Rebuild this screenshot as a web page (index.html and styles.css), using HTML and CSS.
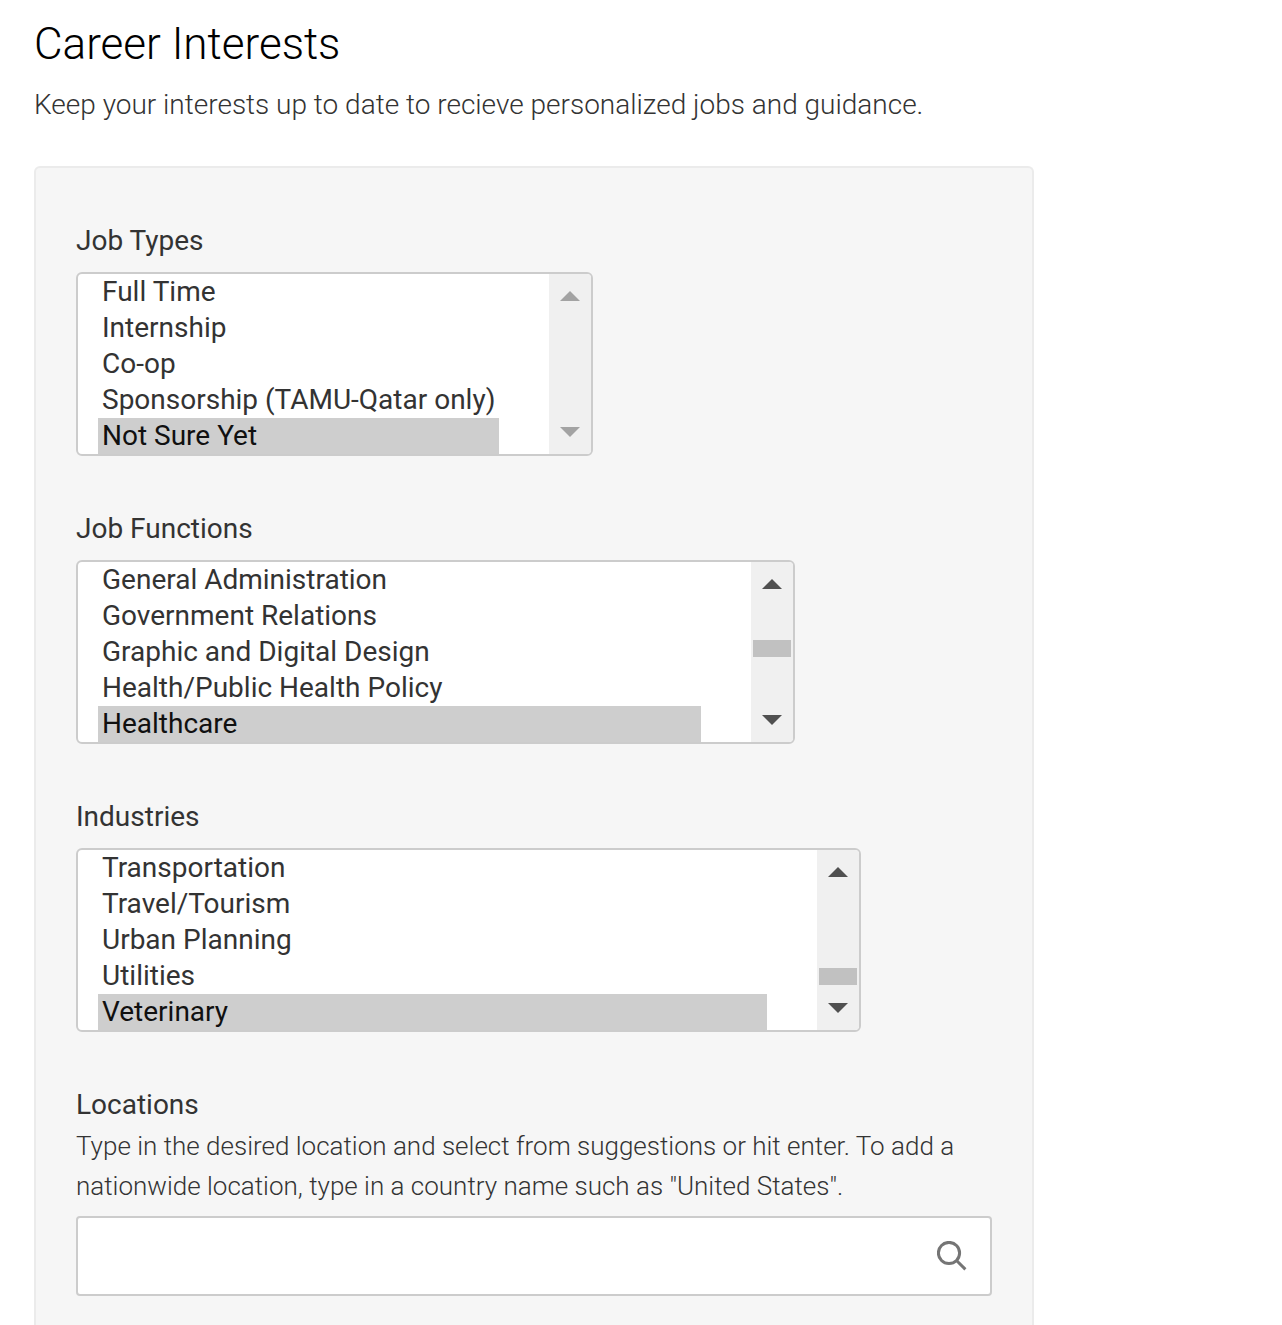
FILE: index.html
```
<!DOCTYPE html>
<html lang="en">
<head>
  <meta charset="UTF-8" />
  <meta name="viewport" content="width=device-width, initial-scale=1.0"/>
  <title>Career Interests</title>
  <link rel="stylesheet" href="styles.css">
</head>
<body>
  <h1>Career Interests</h1>
  <p class="subtitle">Keep your interests up to date to recieve personalized jobs and guidance.</p>

  <div class="panel">
    <div class="field">
      <div class="label">Job Types</div>
      <div class="listbox job-types">
        <ul class="options">
          <li>Full Time</li>
          <li>Internship</li>
          <li>Co-op</li>
          <li>Sponsorship (TAMU-Qatar only)</li>
          <li class="selected">Not Sure Yet</li>
        </ul>
        <div class="scrollbar disabled">
          <svg class="arrow" viewBox="0 0 20 10"><path d="M0 10L10 0L20 10Z"/></svg>
          <svg class="arrow down" viewBox="0 0 20 10"><path d="M0 0H20L10 10Z"/></svg>
        </div>
      </div>
    </div>

    <div class="field">
      <div class="label">Job Functions</div>
      <div class="listbox job-functions">
        <ul class="options">
          <li>General Administration</li>
          <li>Government Relations</li>
          <li>Graphic and Digital Design</li>
          <li>Health/Public Health Policy</li>
          <li class="selected">Healthcare</li>
        </ul>
        <div class="scrollbar">
          <svg class="arrow" viewBox="0 0 20 10"><path d="M0 10L10 0L20 10Z"/></svg>
          <div class="thumb"></div>
          <svg class="arrow down" viewBox="0 0 20 10"><path d="M0 0H20L10 10Z"/></svg>
        </div>
      </div>
    </div>

    <div class="field">
      <div class="label">Industries</div>
      <div class="listbox industries">
        <ul class="options">
          <li>Transportation</li>
          <li>Travel/Tourism</li>
          <li>Urban Planning</li>
          <li>Utilities</li>
          <li class="selected">Veterinary</li>
        </ul>
        <div class="scrollbar">
          <svg class="arrow" viewBox="0 0 20 10"><path d="M0 10L10 0L20 10Z"/></svg>
          <div class="thumb"></div>
          <svg class="arrow down" viewBox="0 0 20 10"><path d="M0 0H20L10 10Z"/></svg>
        </div>
      </div>
    </div>

    <div class="field">
      <label class="label" for="location">Locations</label>
      <p class="help">Type in the desired location and select from suggestions or hit enter. To add a nationwide location, type in a country name such as "United States".</p>
      <div class="search">
        <input type="text" id="location" name="location">
        <svg class="search-icon" viewBox="0 0 30 30">
          <circle cx="12" cy="12" r="10.6"/>
          <path d="M19.5 19.5L28.4 28.4"/>
        </svg>
      </div>
    </div>
  </div>
</body>
</html>
```

FILE: styles.css
```
* {
  box-sizing: border-box;
}

body {
  display: flex;
  flex-direction: column;
  margin: 0;
  padding: 18px 34px 0;
  min-height: 100vh;
  background: #fff;
  color: #333;
  font-family: Roboto, sans-serif;
  font-size: 28px;
}

h1 {
  margin: 0;
  color: #000;
  font-size: 44px;
  font-weight: 300;
  line-height: 52px;
}

.subtitle {
  margin: 15px 0 41px;
  font-weight: 300;
  line-height: 40px;
}

.panel {
  flex: 1;
  width: 1000px;
  padding: 53px 40px 0;
  background: #f6f6f6;
  border: 2px solid #ebebeb;
  border-bottom: none;
  border-radius: 6px 6px 0 0;
}

.field {
  margin-bottom: 53px;
}

.field:last-child {
  margin-bottom: 0;
}

.label {
  display: block;
  line-height: 40px;
  margin-bottom: 11px;
}

.listbox {
  display: flex;
  height: 184px;
  background: #fff;
  border: 2px solid #ccc;
  border-radius: 6px;
  overflow: hidden;
}

.job-types {
  width: 517px;
}

.job-functions {
  width: 719px;
}

.industries {
  width: 785px;
}

.options {
  flex: 1;
  margin: 0;
  padding: 0 50px 0 20px;
  list-style: none;
}

.options li {
  padding: 0 4px;
  line-height: 36px;
  white-space: nowrap;
}

.options .selected {
  background: #cecece;
  color: #101010;
}

.scrollbar {
  display: flex;
  flex-direction: column;
  align-items: center;
  flex-shrink: 0;
  width: 42px;
  padding: 17px 0;
  background: #f0f0f0;
}

.arrow {
  width: 20px;
  height: 10px;
  fill: #505050;
}

.disabled .arrow {
  fill: #a3a3a3;
}

.down {
  margin-top: auto;
}

.thumb {
  width: 38px;
  height: 17px;
  margin-top: 51px;
  background: #c1c1c1;
}

.industries .thumb {
  margin-top: 91px;
}

.help {
  margin: -10px 0 10px;
  font-size: 26px;
  font-weight: 300;
  line-height: 40px;
}

.search {
  display: flex;
  align-items: center;
  height: 80px;
  padding: 0 23px;
  background: #fff;
  border: 2px solid #ccc;
  border-radius: 4px;
}

.search input {
  flex: 1;
  height: 72px;
  border: none;
  outline: none;
  font: inherit;
}

.search-icon {
  width: 30px;
  height: 30px;
  fill: none;
  stroke: #757575;
  stroke-width: 3;
}
```
